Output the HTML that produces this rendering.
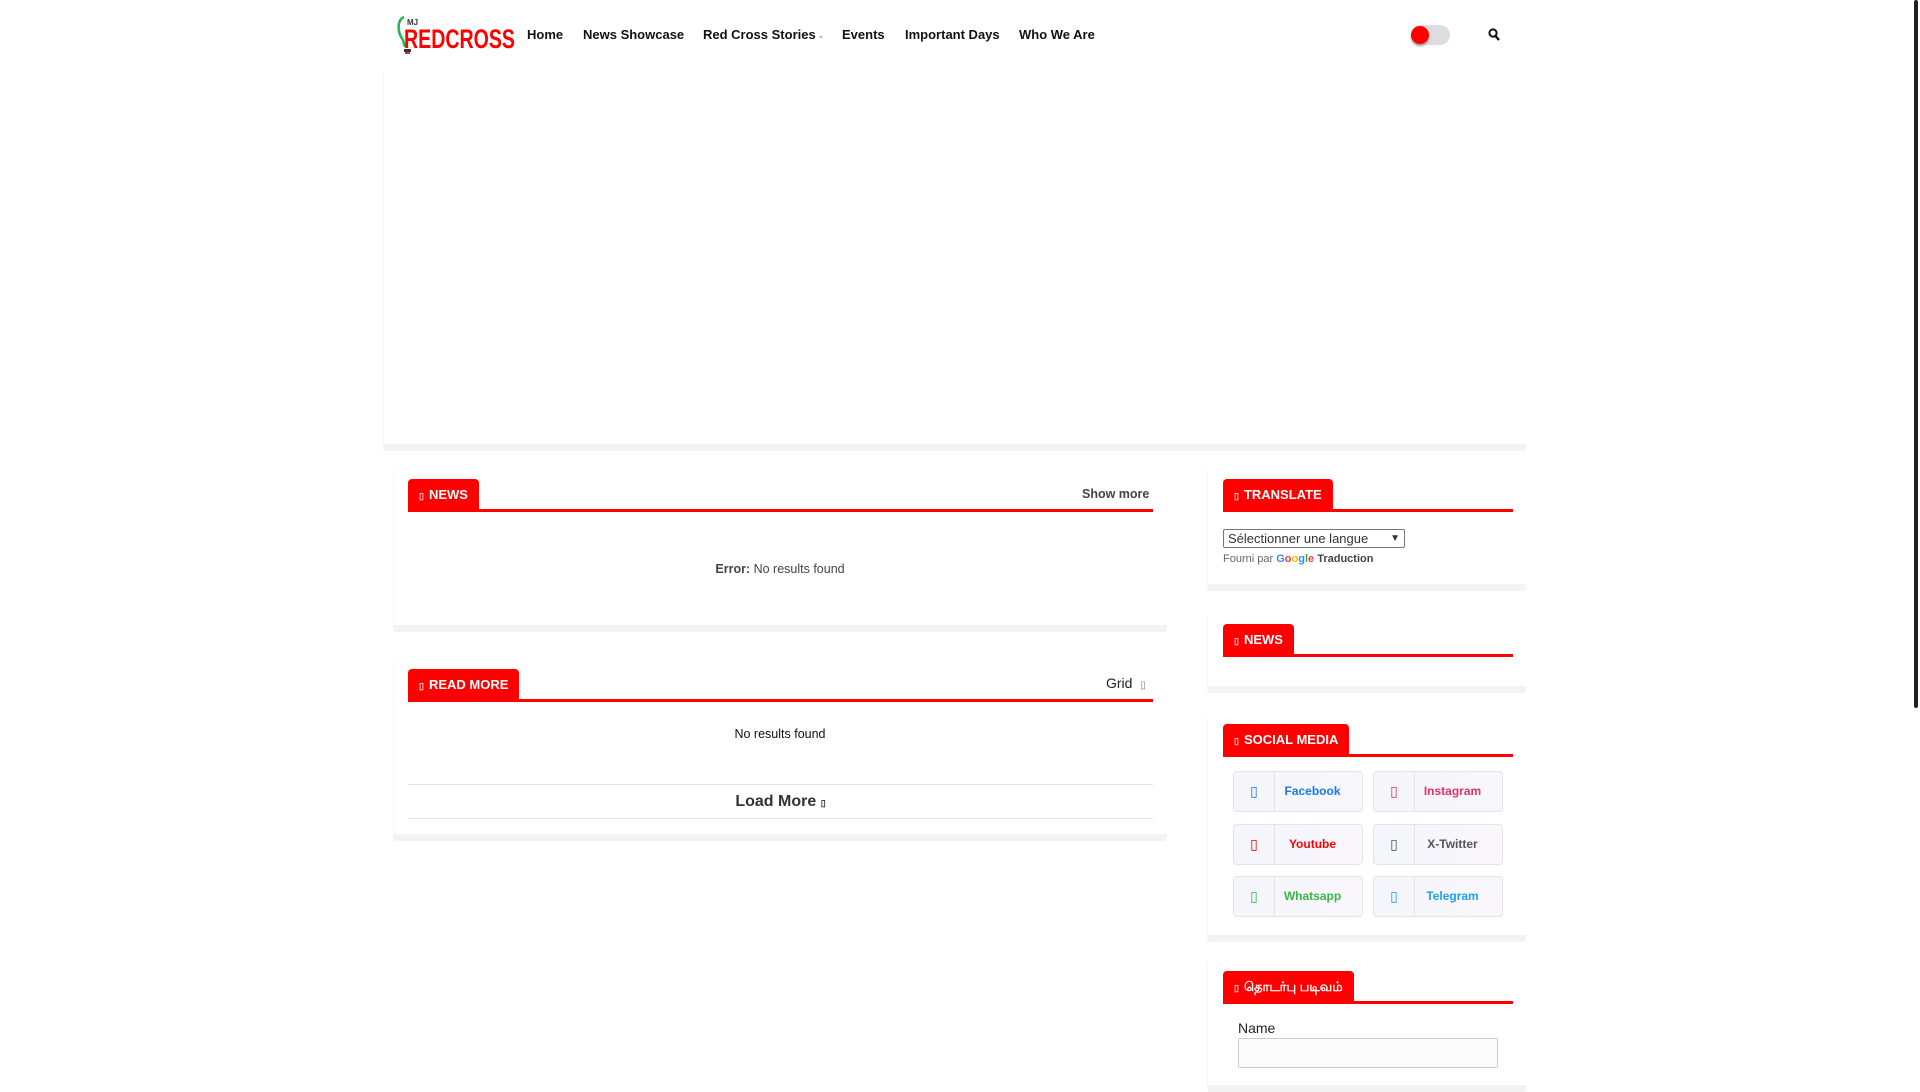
<!DOCTYPE html>
<html><head><meta charset="utf-8"><style>
*{margin:0;padding:0;box-sizing:border-box}
body{width:1920px;height:1080px;background:#fff;font-family:"Liberation Sans",Arial,sans-serif;position:relative;overflow:hidden;color:#222}
.a{position:absolute}
.nav{top:27px;font-size:13px;font-weight:bold;color:#111;white-space:nowrap}
.box{position:absolute;background:#fff;border-bottom:7px solid #f3f3f3;border-left:1px solid #f6f6f6;border-radius:3px}
.lbl{position:absolute;background:#f00;color:#fff;font-weight:bold;font-size:13px;height:31px;line-height:31px;padding:0 11px 0 11px;border-radius:4px 4px 0 0;white-space:nowrap}
.lbl i{font-style:normal;font-size:9px;margin-right:5px;opacity:.8}
.line{position:absolute;height:3px;background:#f00}
.sb{position:absolute;width:130px;height:41px;border:1px solid #e3e3e8;border-radius:4px;background:linear-gradient(90deg,#f4f6fb,#faf7fc)}
.sb .ic{position:absolute;left:0;top:0;width:41px;height:39px;border-right:1px solid #e3e3e8;text-align:center;line-height:39px;font-size:14px}
.sb .t{position:absolute;left:41px;right:12px;top:0;line-height:39px;text-align:center;font-size:12px;font-weight:bold}
</style></head><body>
<svg class="a" style="left:395px;top:14px" width="122" height="42" viewBox="0 0 122 42">
<path d="M9 3 C2 6 2 18 8 26 L10 33" stroke="#2db34a" stroke-width="2.5" fill="none"/>
<text x="12" y="11" font-family="Liberation Sans" font-size="8" font-weight="bold" fill="#333">MJ</text>
<text x="9" y="34" font-family="Liberation Sans" font-size="27" font-weight="bold" fill="#f00" textLength="111" lengthAdjust="spacingAndGlyphs">REDCROSS</text>
<rect x="9" y="35" width="7" height="3" fill="#334"/><rect x="10" y="38" width="5" height="2" fill="#c33"/>
</svg>
<div class="a nav" style="left:527px">Home</div>
<div class="a nav" style="left:583px">News Showcase</div>
<div class="a nav" style="left:703px">Red Cross Stories <span style="font-size:7px">▫</span></div>
<div class="a nav" style="left:842px">Events</div>
<div class="a nav" style="left:905px">Important Days</div>
<div class="a nav" style="left:1019px">Who We Are</div>
<div class="a" style="left:1411px;top:25px;width:39px;height:20px;border-radius:10px;background:#ddd"></div>
<div class="a" style="left:1411px;top:26px;width:18px;height:18px;border-radius:50%;background:#f00;box-shadow:0 2px 2px #999"></div>
<svg class="a" style="left:1488px;top:28px" width="12" height="13" viewBox="0 0 12 13"><circle cx="5" cy="5" r="3.6" stroke="#111" stroke-width="2" fill="none"/><path d="M7.5 8 L11 12" stroke="#111" stroke-width="2.4"/></svg>
<div class="a" style="left:1914px;top:0;width:4px;height:708px;background:#222;border-radius:2px"></div>
<div class="box" style="left:383px;top:70px;width:1143px;height:381px"></div>
<div class="box" style="left:393px;top:469px;width:774px;height:163px"></div>
<div class="lbl" style="left:408px;top:479px"><i>▯</i>NEWS</div>
<div class="line" style="left:408px;top:509px;width:745px"></div>
<div class="a" style="left:1082px;top:487px;font-size:12.5px;font-weight:bold;color:#444">Show more</div>
<div class="a" style="left:393px;width:774px;top:562px;text-align:center;font-size:12.5px;color:#444"><b>Error:</b> No results found</div>
<div class="box" style="left:393px;top:660px;width:774px;height:181px"></div>
<div class="lbl" style="left:408px;top:669px"><i>▯</i>READ MORE</div>
<div class="line" style="left:408px;top:699px;width:745px"></div>
<div class="a" style="left:1106px;top:675px;font-size:14px;color:#222">Grid <span style="font-size:10px;color:#777;margin-left:4px">▯</span></div>
<div class="a" style="left:393px;width:774px;top:727px;text-align:center;font-size:12.5px;color:#111">No results found</div>
<div class="a" style="left:408px;top:784px;width:745px;height:35px;border-top:1px solid #e2e2e2;border-bottom:1px solid #e2e2e2;text-align:center;line-height:33px;font-size:16px;font-weight:bold;color:#333">Load More <span style="font-size:9px">▯</span></div>
<div class="box" style="left:1207px;top:469px;width:319px;height:122px"></div>
<div class="lbl" style="left:1223px;top:479px"><i>▯</i>TRANSLATE</div>
<div class="line" style="left:1223px;top:509px;width:290px"></div>
<div class="a" style="left:1223px;top:529px;width:182px;height:19px;border:1px solid #777;border-radius:2px;font-size:13px;line-height:17px;padding-left:4px;color:#333">Sélectionner une langue<span style="position:absolute;right:4px;top:0;font-size:10px">▼</span></div>
<div class="a" style="left:1223px;top:553px;font-size:11px;color:#666">Fourni par <span style="font-weight:bold"><span style="color:#4285f4">G</span><span style="color:#ea4335">o</span><span style="color:#fbbc05">o</span><span style="color:#4285f4">g</span><span style="color:#34a853">l</span><span style="color:#ea4335">e</span></span> <b style="color:#444">Traduction</b></div>
<div class="box" style="left:1207px;top:614px;width:319px;height:79px"></div>
<div class="lbl" style="left:1223px;top:624px"><i>▯</i>NEWS</div>
<div class="line" style="left:1223px;top:654px;width:290px"></div>
<div class="box" style="left:1207px;top:715px;width:319px;height:227px"></div>
<div class="lbl" style="left:1223px;top:724px"><i>▯</i>SOCIAL MEDIA</div>
<div class="line" style="left:1223px;top:754px;width:290px"></div>
<div class="sb" style="left:1233px;top:771px"><div class="ic" style="color:#1877f2">▯</div><div class="t" style="color:#1877f2">Facebook</div></div>
<div class="sb" style="left:1373px;top:771px"><div class="ic" style="color:#e1306c">▯</div><div class="t" style="color:#e1306c">Instagram</div></div>
<div class="sb" style="left:1233px;top:824px"><div class="ic" style="color:#f00">▯</div><div class="t" style="color:#f00">Youtube</div></div>
<div class="sb" style="left:1373px;top:824px"><div class="ic" style="color:#555">▯</div><div class="t" style="color:#555">X-Twitter</div></div>
<div class="sb" style="left:1233px;top:876px"><div class="ic" style="color:#3bb54a">▯</div><div class="t" style="color:#3bb54a">Whatsapp</div></div>
<div class="sb" style="left:1373px;top:876px"><div class="ic" style="color:#1da1f2">▯</div><div class="t" style="color:#1da1f2">Telegram</div></div>
<div class="box" style="left:1207px;top:962px;width:319px;height:130px"></div>
<div class="lbl" style="left:1223px;top:971px;font-family:'Liberation Sans','Noto Sans CJK SC',sans-serif"><i>▯</i>தொடர்பு படிவம்</div>
<div class="line" style="left:1223px;top:1001px;width:290px"></div>
<div class="a" style="left:1238px;top:1020px;font-size:14px;color:#222">Name</div>
<div class="a" style="left:1238px;top:1038px;width:260px;height:30px;border:1px solid #ccc;border-radius:2px;background:#fcfcfc"></div>
</body></html>
